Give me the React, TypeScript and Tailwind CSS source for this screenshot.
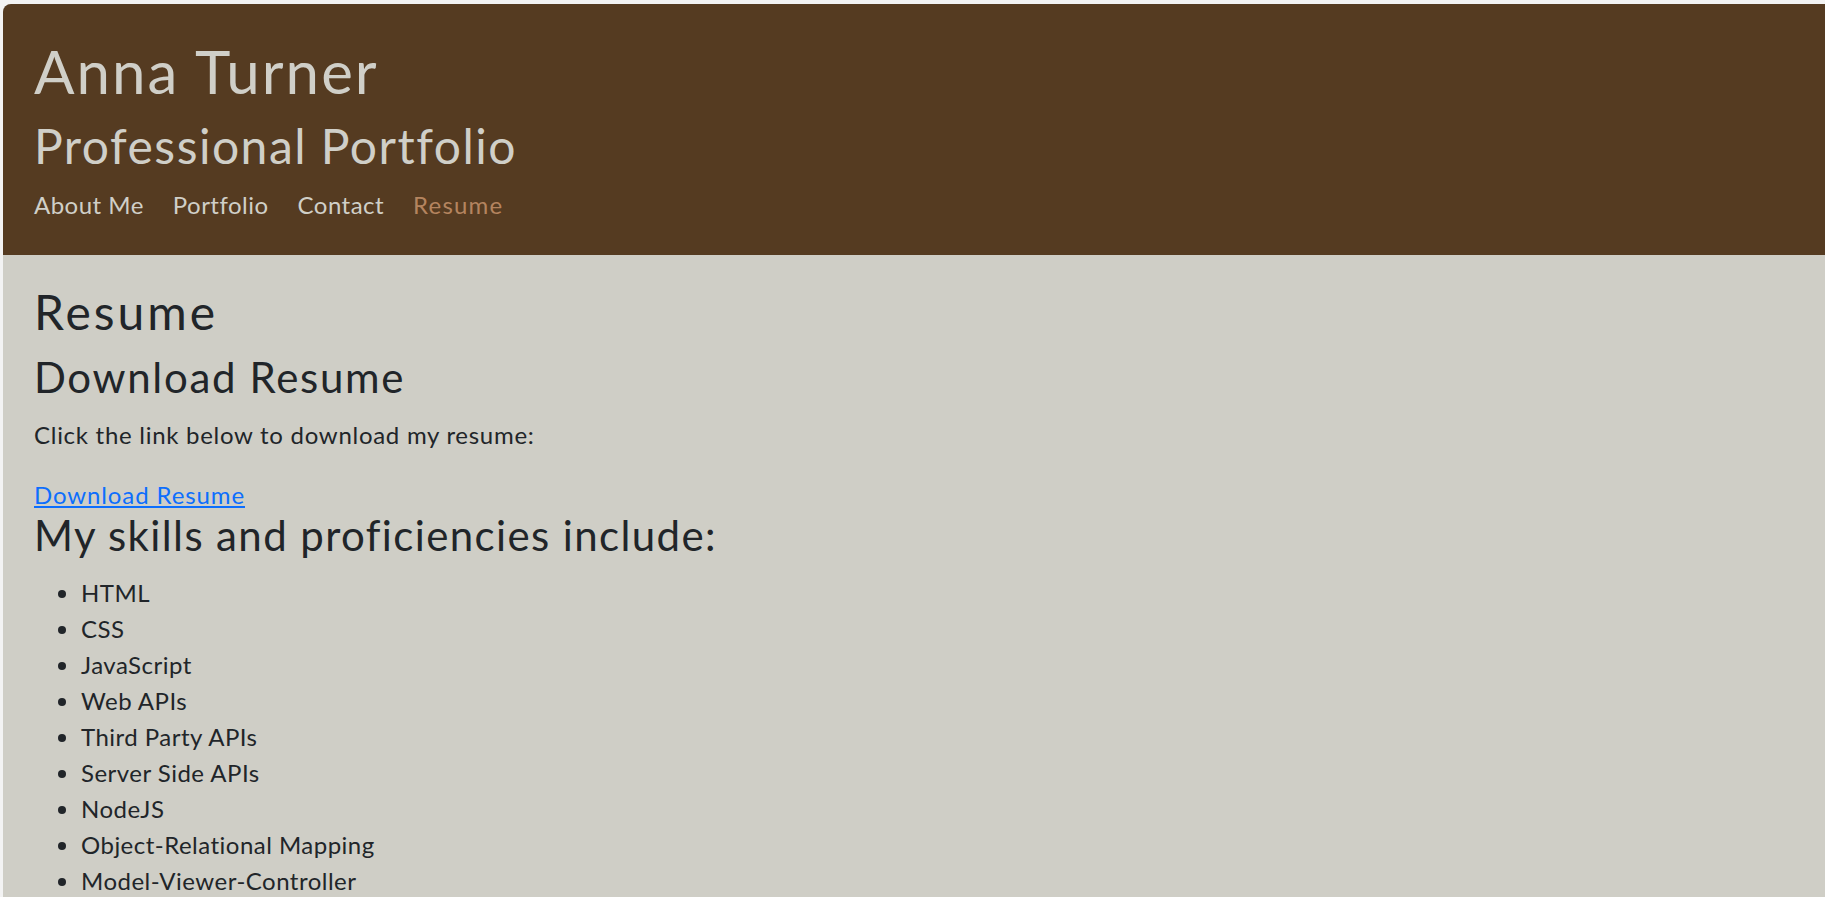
import React from "react";

const skills = [
  "HTML",
  "CSS",
  "JavaScript",
  "Web APIs",
  "Third Party APIs",
  "Server Side APIs",
  "NodeJS",
  "Object-Relational Mapping",
  "Model-Viewer-Controller",
];

const navLinks = ["About Me", "Portfolio", "Contact", "Resume"];

export default function App() {
  return (
    <div className="h-[897px] w-full overflow-hidden bg-[#f3f3f3] pl-[3px] pt-[4px] font-['Lato',sans-serif] tracking-[0.03em]">
      <div className="h-full overflow-hidden rounded-tl-lg bg-[#cfcec6]">
        {/* Header */}
        <header className="bg-[#553b21] pl-[31px] pt-[31px] pb-[32px] text-[#d0cfc8]">
          <h1 className="text-[60px] leading-[72px] font-normal tracking-[0.034em]">Anna Turner</h1>
          <h2 className="mt-[10px] text-[48px] leading-[58px] font-normal tracking-[0.031em]">Professional Portfolio</h2>
          <nav className="mt-[12px] flex gap-[29px] text-[24px] leading-[36px]">
            {navLinks.map((link) => (
              <a
                key={link}
                href="#"
                className={link === "Resume" ? "text-[#b4845f] tracking-[0.05em]" : "text-[#d0cfc8]"}
              >
                {link}
              </a>
            ))}
          </nav>
        </header>

        {/* Resume section */}
        <main className="pl-[31px] pt-[28px] text-[#212529]">
          <h2 className="text-[48px] leading-[58px] font-normal tracking-[0.062em]">Resume</h2>
          <h3 className="mt-[11px] text-[42px] leading-[50px] font-normal tracking-[0.04em]">Download Resume</h3>
          <p className="mt-[15px] text-[24px] leading-[36px] tracking-[0.03em]">
            Click the link below to download my resume:
          </p>
          <a
            href="#"
            className="mt-[24px] block w-fit text-[24px] leading-[36px] tracking-[0.037em] text-[#0d6efd] underline"
          >
            Download Resume
          </a>
          <h3 className="text-[42px] leading-[44px] font-normal tracking-[0.033em]">
            My skills and proficiencies include:
          </h3>
          <ul className="mt-[18px] list-disc pl-[47px] text-[24px] leading-[36px]">
            {skills.map((skill) => (
              <li key={skill}>{skill}</li>
            ))}
          </ul>
        </main>
      </div>
    </div>
  );
}
